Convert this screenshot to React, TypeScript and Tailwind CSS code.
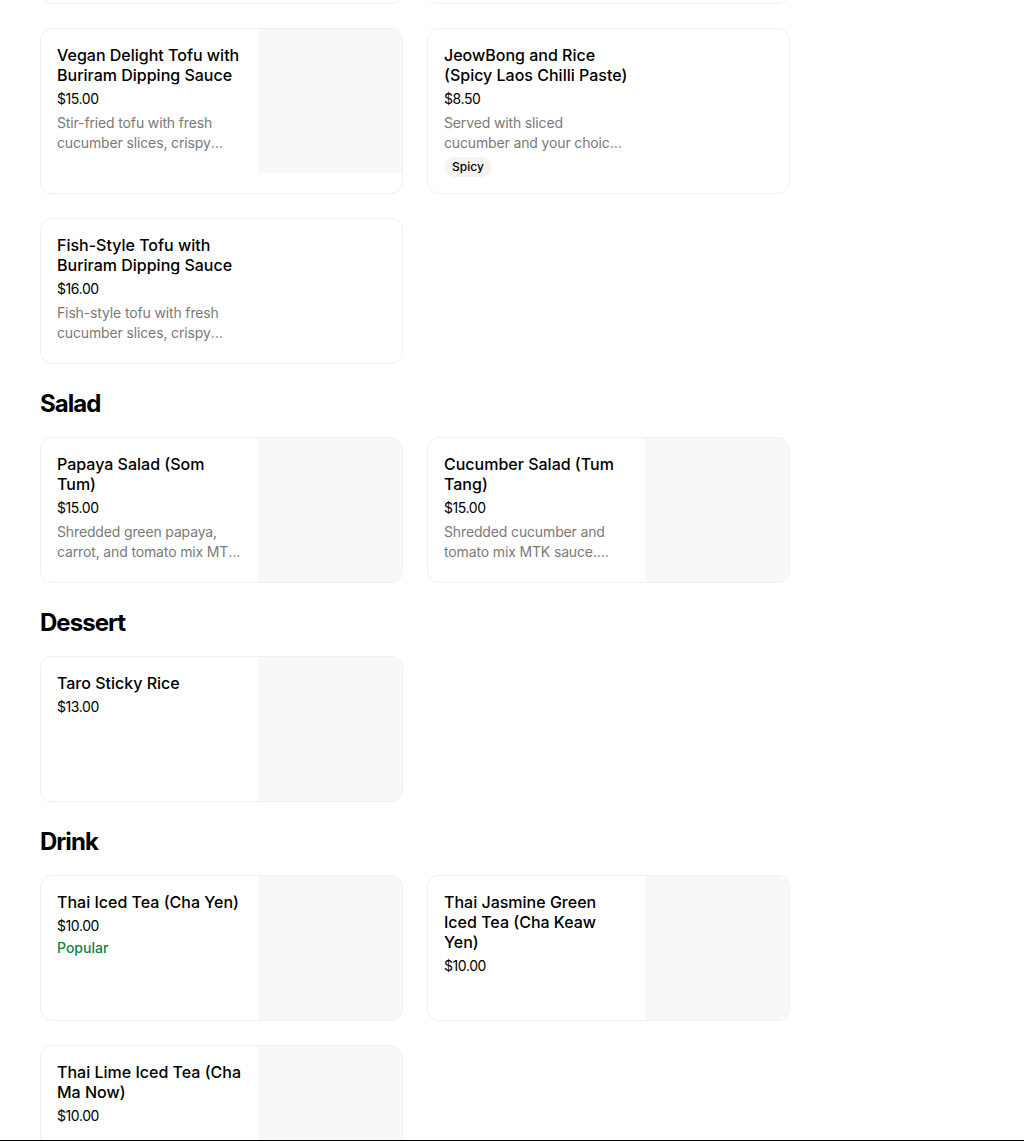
import React from "react";

type Item = {
	name: string;
	price?: string;
	description?: string;
	image?: boolean;
	tag?: string;
	popular?: boolean;
};

type Section = {
	title?: string;
	items: Item[];
};

const sections: Section[] = [
	{
		items: [
			{ name: "Tofu Larb", price: "$15.00", description: "Minced tofu with herbs", image: false },
			{ name: "Sticky Rice", price: "$4.00", image: false },
			{
				name: "Vegan Delight Tofu with Buriram Dipping Sauce",
				price: "$15.00",
				description: "Stir-fried tofu with fresh cucumber slices, crispy shallots and herbs served with dipping sauce",
				image: true,
			},
			{
				name: "JeowBong and Rice (Spicy Laos Chilli Paste)",
				price: "$8.50",
				description: "Served with sliced cucumber and your choice of sticky rice or jasmine rice",
				tag: "Spicy",
			},
			{
				name: "Fish-Style Tofu with Buriram Dipping Sauce",
				price: "$16.00",
				description: "Fish-style tofu with fresh cucumber slices, crispy shallots and herbs",
			},
		],
	},
	{
		title: "Salad",
		items: [
			{
				name: "Papaya Salad (Som Tum)",
				price: "$15.00",
				description: "Shredded green papaya, carrot, and tomato mix MTK sauce with peanuts",
				image: true,
			},
			{
				name: "Cucumber Salad (Tum Tang)",
				price: "$15.00",
				description: "Shredded cucumber and tomato mix MTK sauce. Topped with peanuts",
				image: true,
			},
		],
	},
	{
		title: "Dessert",
		items: [{ name: "Taro Sticky Rice", price: "$13.00", image: true }],
	},
	{
		title: "Drink",
		items: [
			{ name: "Thai Iced Tea (Cha Yen)", price: "$10.00", image: true, popular: true },
			{ name: "Thai Jasmine Green Iced Tea (Cha Keaw Yen)", price: "$10.00", image: true },
			{ name: "Thai Lime Iced Tea (Cha Ma Now)", price: "$10.00", image: true },
		],
	},
];

function MenuCard({ item }: { item: Item }) {
	return (
		<div className="flex min-h-[146px] overflow-hidden rounded-xl border border-[#f0f0f0] bg-white">
			<div className="flex min-w-0 flex-1 flex-col p-4">
				<h3 className="text-base leading-5 font-medium text-black">{item.name}</h3>
				{item.price && (
					<p className="mt-1 text-sm leading-5 tracking-[-0.03em] text-black">{item.price}</p>
				)}
				{item.popular && <p className="mt-0.5 text-sm leading-5 font-medium text-[#0e8345]">Popular</p>}
				{item.description && (
					<p className="mt-1 line-clamp-2 text-sm leading-5 tracking-[-0.01em] text-[#7a7a7a]">
						{item.description}
					</p>
				)}
				{item.tag && (
					<span className="mt-1 self-start rounded-full bg-[#f3f3f3] px-2 text-xs leading-5 font-medium text-black">
						{item.tag}
					</span>
				)}
			</div>

			<div className="w-[144px] shrink-0">
				{item.image && <div className="h-[144px] w-full bg-[#f8f8f8]" />}
			</div>
		</div>
	);
}

function App() {
	return (
		<div className="bg-white font-['Inter',sans-serif]">
			<div className="h-[1140px] overflow-hidden">
				<div className="-mt-[142px] w-[830px] px-10">
					{sections.map((section, index) => (
						<section key={index} className={index > 0 ? "mt-6" : ""}>
							{section.title && (
								<h2 className="mb-[17px] text-2xl leading-8 font-bold tracking-[-0.04em] text-black">
									{section.title}
								</h2>
							)}

							<div className="grid grid-cols-2 gap-6">
								{section.items.map((item) => (
									<MenuCard key={item.name} item={item} />
								))}
							</div>
						</section>
					))}
				</div>
			</div>
			<div className="h-px bg-black" />
		</div>
	);
}

export default App;
